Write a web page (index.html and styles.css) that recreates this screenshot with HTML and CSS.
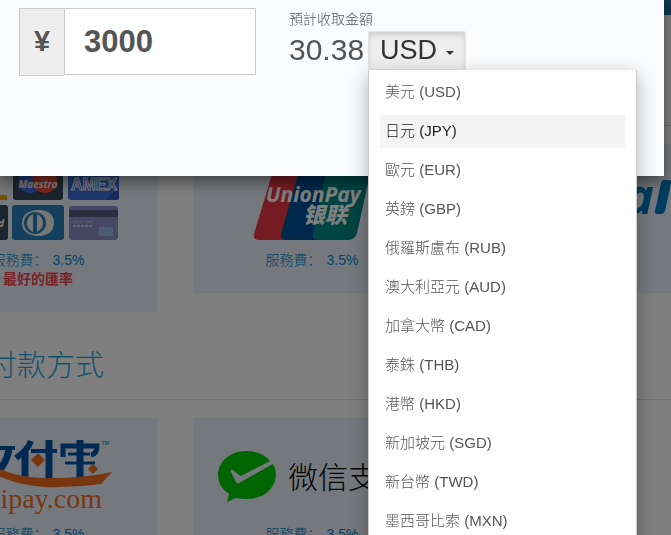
FILE: index.html
```html
<!DOCTYPE html>
<html lang="zh-Hant">
<head>
    <meta charset="UTF-8">
    <meta name="viewport" content="width=device-width, initial-scale=1.0">
    <title>付款方式</title>
    <link rel="stylesheet" href="styles.css">
</head>
<body>
    <div class="topbar"></div>
    <main class="page">
        <section>
            <div class="title"></div>
            <div class="cards">
                <div class="card">
                    <svg class="logo" width="238" height="96" viewBox="0 0 238 96" role="img" aria-label="MasterCard, Maestro, American Express, Diners Club">
                        <rect x="37" y="18" width="51" height="38" rx="3" fill="#eee"/>
                        <rect x="37" y="51" width="51" height="5" fill="#ff9e00"/>
                        <rect x="37" y="61" width="52" height="35" rx="3" fill="#394a5c"/>
                        <text x="85" y="83" class="logo-mark" text-anchor="end">Card</text>
                        <rect x="94" y="18" width="50" height="38" rx="3" fill="#36495a"/>
                        <circle cx="111" cy="37" r="12" fill="#3b6fe0"/>
                        <circle cx="126" cy="37" r="12" fill="#f0503c"/>
                        <text x="119" y="44" class="logo-mark" text-anchor="middle">Maestro</text>
                        <rect x="149" y="18" width="51" height="38" rx="3" fill="#3e6fd8"/>
                        <path d="M186 56l14-12v9q0 3-3 3z" fill="#2c57b0"/>
                        <text x="175" y="46" class="logo-amex" text-anchor="middle">AMEX</text>
                        <rect x="93" y="61" width="52" height="35" rx="3" fill="#2980ba"/>
                        <path d="M117 66h5q13 2 13 13t-13 13h-5q-14-2-14-13t14-13z" fill="#eee"/>
                        <circle cx="116" cy="79" r="11" fill="#2980ba"/>
                        <path d="M114 70q-6 3-6 9t6 9zM118 70q6 3 6 9t-6 9z" fill="#eee"/>
                        <rect x="150" y="62" width="49" height="34" rx="3" fill="#8a91c8"/>
                        <rect x="150" y="66" width="49" height="7" fill="#555a7e"/>
                        <path d="M154 78h9m3 0h8" stroke="#bcc8e8" stroke-width="1"/>
                        <path d="M154 82h20" stroke="#bcc8e8" stroke-width="2" stroke-dasharray="3 1"/>
                        <rect x="180" y="83" width="14" height="9" rx="1" fill="#98b8e8"/>
                    </svg>
                    <p class="fee" lang="zh-Hans"><span>服務費：</span><span>3.5%</span></p>
                    <p class="best">最好的匯率</p>
                </div>
                <div class="card">
                    <svg class="logo" width="238" height="96" viewBox="0 0 238 96" role="img" aria-label="UnionPay 银联">
                        <path d="M82 20q2-6 8-6h40L112 96H66q-6 0-5-6z" fill="#e83842"/>
                        <path d="M108 20q2-6 8-6h42L140 96H94q-7 0-6-6z" fill="#005198"/>
                        <path d="M135 20q2-6 8-6h31q7 0 5 7l-15 68q-2 7-9 7h-29q-7 0-6-6z" fill="#008a84"/>
                        <text x="73" y="58" class="logo-union">UnionPay</text>
                        <text x="110" y="79" class="logo-yinlian">银联</text>
                    </svg>
                    <p class="fee" lang="zh-Hans"><span>服務費：</span><span>3.5%</span></p>
                </div>
                <div class="card">
                    <svg class="logo" width="238" height="96" viewBox="0 0 238 96" role="img" aria-label="PayPal">
                        <text x="187" y="70" class="logo-paypal" text-anchor="end">PayPa</text>
                        <path d="M197 36h5q3 0 2 3l-6 28q-1 3-3 3h-5q-3 0-2-3l6-28q1-3 3-3z" fill="#0079c1"/>
                    </svg>
                </div>
            </div>
        </section>
        <section>
            <h2 class="title">付款方式</h2>
            <div class="cards">
                <div class="card">
                    <svg class="logo" width="238" height="96" viewBox="0 0 238 96" role="img" aria-label="支付宝 Alipay.com">
                        <g fill="none" stroke="#0055a8" stroke-width="6">
                            <path d="M64 30h32" stroke-width="4"/>
                            <path d="M90 31q-2 14-13 25" stroke-width="7"/>
                            <path d="M112 23q-3 9-15 17"/>
                            <path d="M106 34v28M130 22v40" stroke-width="7"/>
                            <path d="M112 33h26" stroke-width="4"/>
                            <path d="M144 39V28h34q0 8-6 9" stroke-width="5"/>
                            <path d="M161 22v40" stroke-width="7"/>
                            <path d="M149 36h22M146 45h30" stroke-width="3"/>
                        </g>
                        <path d="M119 35l7 7-7 7-7-7zM174 46l5 5-5 5-5-5z" fill="#f26a21"/>
                        <path d="M78 50q25 11 55 10 32 0 60-6l-11 12q-28 4-56 3-30-2-48-12z" fill="#f26a21"/>
                        <text x="183" y="90" class="logo-alipay" text-anchor="end">Alipay.com</text>
                        <text x="183" y="27" class="logo-tm">TM</text>
                    </svg>
                    <p class="fee" lang="zh-Hans"><span>服務費：</span><span>3.5%</span></p>
                </div>
                <div class="card">
                    <svg class="logo" width="238" height="96" viewBox="0 0 238 96" role="img" aria-label="微信支付">
                        <path d="M77 43Q68 33 53 33C37 33 25 44 25 57q0 12 11 19l-2 8 9-4q5 1 11 1c17 0 29-11 29-25q0-5-3-10L46 65q-2 1-3-1l-5-10q-1-3 2-2l6 5q2 1 4 0z" fill="#00c800"/>
                        <text x="95" y="70" class="logo-wechat">微信支付</text>
                    </svg>
                    <p class="fee" lang="zh-Hans"><span>服務費：</span><span>3.5%</span></p>
                </div>
            </div>
        </section>
    </main>

    <div class="overlay">
        <div class="modal">
            <div class="amount">
                <label class="addon" for="amount">¥</label>
                <input class="amount-input" id="amount" type="text" value="3000">
            </div>
            <div class="result">
                <div class="result-label">預計收取金額</div>
                <div class="result-row">
                    <span class="result-value">30.38</span>
                    <div class="dropdown">
                        <button class="dropdown-btn" type="button">USD <span class="caret"></span></button>
                        <ul class="menu">
                            <li><a href="#">美元 (USD)</a></li>
                            <li><a href="#" class="active">日元 (JPY)</a></li>
                            <li><a href="#">歐元 (EUR)</a></li>
                            <li><a href="#">英鎊 (GBP)</a></li>
                            <li><a href="#">俄羅斯盧布 (RUB)</a></li>
                            <li><a href="#">澳大利亞元 (AUD)</a></li>
                            <li><a href="#">加拿大幣 (CAD)</a></li>
                            <li><a href="#">泰銖 (THB)</a></li>
                            <li><a href="#">港幣 (HKD)</a></li>
                            <li><a href="#">新加坡元 (SGD)</a></li>
                            <li><a href="#">新台幣 (TWD)</a></li>
                            <li><a href="#">墨西哥比索 (MXN)</a></li>
                        </ul>
                    </div>
                </div>
            </div>
        </div>
    </div>
</body>
</html>
```
FILE: styles.css
```css
* {
    box-sizing: border-box;
}

body {
    margin: 0;
    height: 100vh;
    overflow: hidden;
    background: #fff;
    font-family: "Liberation Sans", "Noto Sans CJK TC", sans-serif;
    font-size: 14px;
    font-weight: 300;
    color: #555;
}

.topbar {
    height: 15px;
    background: #1f709c;
}

/* the page is scrolled sideways under the dialog */
.page {
    margin: 0 -34px 0 -81px;
}

.title {
    height: 69px;
    margin: 19px 0 18px;
    padding: 18px 0 0 69px;
    border-bottom: 1px solid #ddd;
    font-size: 29px;
    font-weight: 300;
    line-height: 34px;
    color: #1ea8d8;
}

section:first-child .title {
    height: 92px;
}

.cards {
    display: grid;
    grid-template-columns: repeat(3, 1fr);
    gap: 36px;
    align-items: start;
}

.card {
    min-height: 149px;
    background: #eaf3fa;
    text-align: center;
}

.card:first-child {
    min-height: 168px;
}

.logo {
    display: block;
    margin: 0 auto 11px;
}

.fee,
.best {
    margin: 0;
    line-height: 19px;
}

.fee {
    font-family: "Liberation Sans", "Noto Sans CJK SC", sans-serif;
    color: #0088cc;
}

.fee span + span {
    margin-left: 5px;
}

.best {
    font-weight: bold;
    color: #f04450;
}

.logo-mark {
    font: italic bold 10px "Open Sans", sans-serif;
    fill: #fff;
}

.logo-amex {
    font: bold 16px "Liberation Sans", sans-serif;
    fill: #3e6fd8;
    stroke: #fff;
    stroke-width: 1;
}

.logo-union {
    font: italic bold 21px "Open Sans", sans-serif;
    fill: #fff;
}

.logo-yinlian {
    font: italic 900 22px "Noto Sans CJK SC", sans-serif;
    fill: #fff;
}

.logo-paypal {
    font: italic bold 50px "Open Sans", sans-serif;
    fill: #0079c1;
}

.logo-alipay {
    font: 28px "Liberation Serif", serif;
    fill: #f26a21;
}

.logo-tm {
    font: 5px "Liberation Sans", sans-serif;
    fill: #0055a8;
}

.logo-wechat {
    font: 300 30px "Noto Sans CJK SC", sans-serif;
    fill: #000;
}

.overlay {
    position: fixed;
    inset: 0;
    background: rgba(0, 0, 0, 0.5);
}

.modal {
    display: flex;
    align-items: flex-start;
    gap: 33px;
    min-height: 176px;
    margin-right: 7px;
    padding: 8px 19px;
    background: #f9fbfd;
    box-shadow: 0 5px 15px rgba(0, 0, 0, 0.5);
}

.amount {
    display: flex;
    align-items: flex-start;
    width: 237px;
}

.addon {
    width: 45px;
    height: 68px;
    border: 1px solid #ccc;
    border-right: 0;
    background: #eee;
    font-size: 29px;
    font-weight: bold;
    line-height: 64px;
    text-align: center;
}

.amount-input {
    flex: 1;
    min-width: 0;
    height: 67px;
    padding: 0 19px;
    border: 1px solid #ccc;
    background: #fff;
    font: bold 31px "Liberation Sans", sans-serif;
    color: #555;
}

.result-label {
    line-height: 23px;
}

.result-row {
    display: flex;
    gap: 4px;
}

.result-value {
    font-size: 30px;
    line-height: 38px;
}

.dropdown {
    position: relative;
}

.dropdown-btn {
    display: flex;
    align-items: center;
    gap: 9px;
    height: 39px;
    padding: 0 11px;
    border: 1px solid #e4e4e4;
    border-radius: 2px;
    background: #eee;
    box-shadow: inset 0 3px 5px rgba(0, 0, 0, 0.13);
    font: 27px "Liberation Sans", sans-serif;
    color: #333;
}

.caret {
    margin-top: 4px;
    border-top: 4px solid #333;
    border-right: 4px solid transparent;
    border-left: 4px solid transparent;
}

.menu {
    position: absolute;
    top: 100%;
    left: 0;
    width: 269px;
    margin: 0;
    padding: 6px 11px;
    border: 1px solid #ccc;
    border-top: 0;
    background: #fff;
    box-shadow: 0 6px 18px rgba(0, 0, 0, 0.3);
    list-style: none;
}

.menu li {
    margin-bottom: 6px;
}

.menu a {
    display: block;
    padding: 0 5px 1px;
    font-size: 15px;
    line-height: 32px;
    color: #555;
    text-decoration: none;
}

.menu .active {
    background: #f4f4f4;
    color: #222;
}
```
